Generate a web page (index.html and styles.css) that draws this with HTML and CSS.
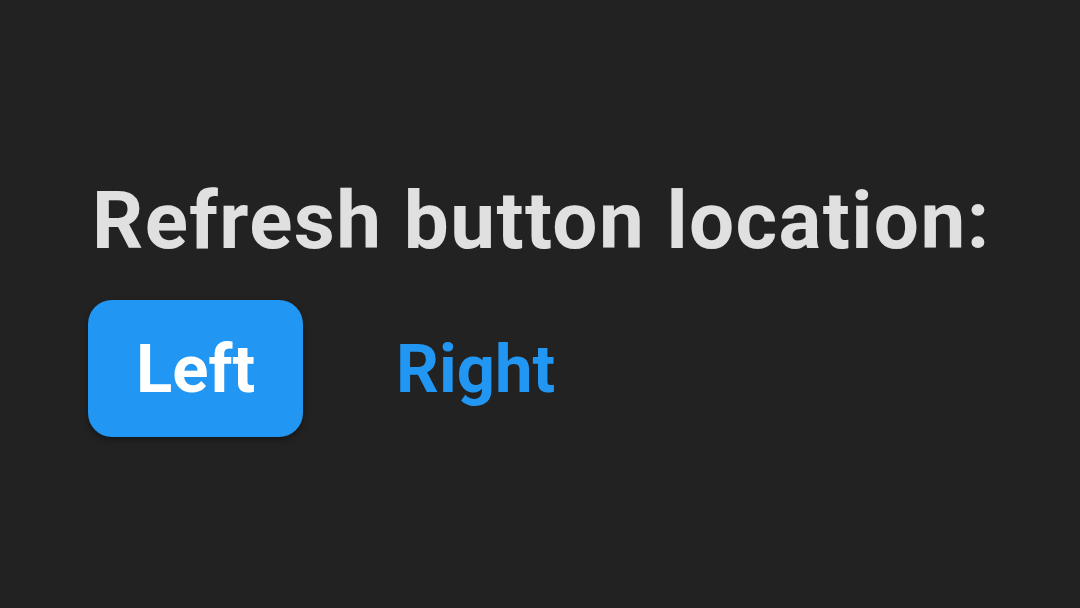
FILE: index.html
```html
<!DOCTYPE html>
<html lang="en">
  <head>
    <meta charset="UTF-8" />
    <title>Refresh button location</title>
    <link rel="stylesheet" href="styles.css">
  </head>
  <body>
    <!-- 설정 박스 -->
    <main class="setting">
      <h1 class="setting-title">Refresh button location:</h1>
      <div class="choice">
        <button class="choice-btn on" type="button">Left</button>
        <button class="choice-btn" type="button">Right</button>
      </div>
    </main>
  </body>
</html>
```

FILE: styles.css
```css
/* 초기화 */
html,
body,
h1 {
  margin: 0;
  padding: 0;
}

body {
  width: 1080px;
  height: 608px;
  background-color: #222;
  font-family: Roboto, "Liberation Sans", sans-serif;
  overflow: hidden;
}

/* 설정 박스 */
.setting {
  padding: 176px 0 0 88px;
}

.setting-title {
  margin-left: 4px;
  color: #e0e0e0;
  font-size: 80px;
  font-weight: 700;
  line-height: 90px;
  letter-spacing: 1.4px;
}

/* 선택 버튼 줄 */
.choice {
  display: flex;
  align-items: center;
  gap: 45px;
  margin-top: 34px;
}

.choice-btn {
  height: 137px;
  padding: 0 48px;
  border: 0;
  border-radius: 24px;
  background: none;
  color: #2196f3;
  font-family: inherit;
  font-size: 67px;
  font-weight: 700;
}

/* 선택된 버튼 */
.choice-btn.on {
  background-color: #2196f3;
  color: #fff;
  box-shadow: 0 3px 6px rgba(0, 0, 0, 0.35);
}
```
